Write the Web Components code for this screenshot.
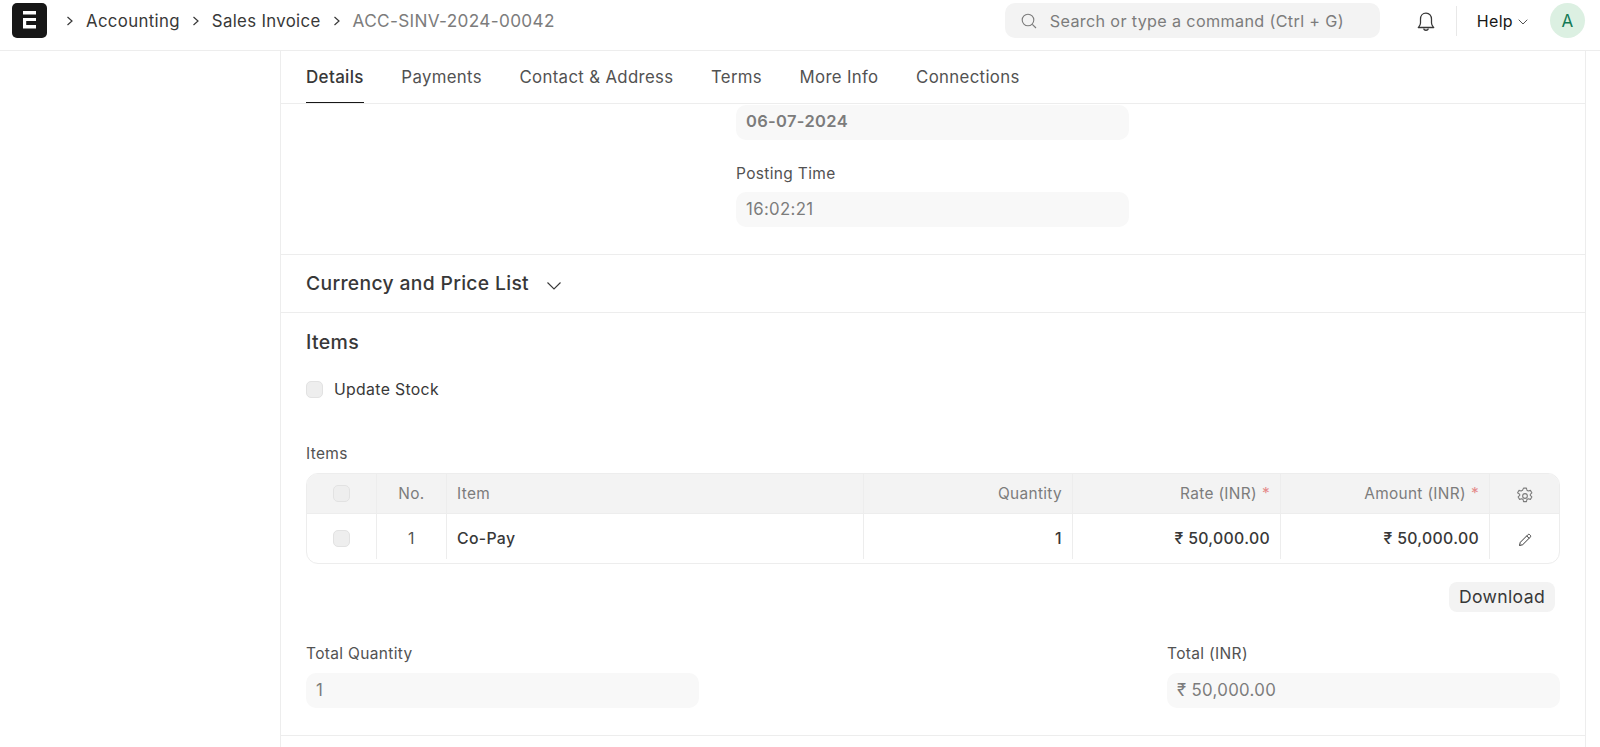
<!DOCTYPE html>
<html>
<head>
<meta charset="utf-8">
<title>ACC-SINV-2024-00042</title>
<style>
    html, body { margin: 0; padding: 0; background: #fff; overflow: hidden; height: 747px; }
    body { font-family: Inter, "Noto Sans", sans-serif; font-size: 16.8px; letter-spacing: 0.02em; color: #383838; }
</style>
</head>
<body>
<erp-navbar></erp-navbar>
<form-page>
    <form-tabs></form-tabs>
    <form-section pad="1px 25px 27px">
        <form-grid>
            <div></div>
            <div class="middle" style="margin: 0 38px 0 37px">
                <form-field value="06-07-2024" strong></form-field>
                <form-field label="Posting Time" value="16:02:21" style="margin-top: 24px"></form-field>
            </div>
        </form-grid>
    </form-section>
    <collapse-head>Currency and Price List</collapse-head>
    <form-section pad="17px 25px 26.5px">
        <section-title>Items</section-title>
        <check-field style="margin-top: 25px">Update Stock</check-field>
        <field-label style="margin-top: 45px; margin-bottom: 9px">Items</field-label>
        <items-table></items-table>
        <table-actions></table-actions>
        <form-grid style="margin-top: 32px; --label-gap: 9px">
            <form-field label="Total Quantity" value="1"></form-field>
            <div></div>
            <form-field label="Total (INR)" value="₹ 50,000.00"></form-field>
        </form-grid>
    </form-section>
</form-page>

<script>
class ErpNavbar extends HTMLElement {
    constructor() {
        super();
        this.attachShadow({ mode: 'open' });
        const chevron = `<svg class="crumb-sep" width="8" height="12" viewBox="0 0 8 12" fill="none" stroke="#383838" stroke-width="1.2"><path d="M1.5 2 L6 6 L1.5 10"/></svg>`;
        this.shadowRoot.innerHTML = `
            <style>
                :host { display: flex; align-items: center; height: 50px; border-bottom: 1px solid #ededed; box-sizing: content-box; padding: 0 15px 0 12px; }
                .logo { width: 35px; height: 35px; flex: none; margin-top: -9px; }
                .crumbs { display: flex; align-items: center; margin-left: 19px; margin-top: -9px; color: #383838; }
                .crumb-sep { margin-right: 12px; }
                .crumbs span { margin-right: 12px; }
                .crumbs span.current { color: #7c7c7c; margin: 0; font-size: 17.2px; }
                .right { margin-left: auto; display: flex; align-items: center; margin-top: -9px; }
                .search { width: 375px; height: 35px; box-sizing: border-box; background: #f3f3f3; border-radius: 10px; display: flex; align-items: center; padding-left: 16px; color: #7c7c7c; font-size: 16.2px; }
                .search svg { margin-right: 13px; flex: none; }
                .bell { margin-left: 35px; display: flex; margin-top: 2px; }
                .divider { width: 1px; height: 30px; background: #e8e8e8; margin-left: 19px; }
                .help { margin-left: 20px; color: #171717; font-size: 16px; }
                .help-arrow { margin-left: 5px; margin-top: 3px; }
                .avatar { width: 35px; height: 35px; border-radius: 50%; background: #dcf0e2; color: #137a55; display: flex; align-items: center; justify-content: center; margin-left: 22px; font-size: 17px; }
            </style>
            <svg class="logo" viewBox="0 0 35 35">
                <rect width="35" height="35" rx="5" fill="#171717"/>
                <path fill="#fff" d="M11 8h13v3.4H11z M11 15h13v3H14.2v4H24v3.4H11z"/>
            </svg>
            <div class="crumbs">
                ${chevron}<span>Accounting</span>${chevron}<span>Sales Invoice</span>${chevron}<span class="current">ACC-SINV-2024-00042</span>
            </div>
            <div class="right">
                <div class="search">
                    <svg width="16" height="16" viewBox="0 0 16 16" fill="none" stroke="#7c7c7c" stroke-width="1.1"><circle cx="7" cy="7" r="5.8"/><path d="M11.3 11.3 L15 15"/></svg>
                    <span>Search or type a command (Ctrl + G)</span>
                </div>
                <div class="bell">
                    <svg width="22" height="22" viewBox="0 0 20 20" fill="none" stroke="#383838" stroke-width="1.15" stroke-linejoin="round"><path d="M10 2 C6.8 2 5 4.4 5 7.4 V11 C5 13.2 3.6 14.3 3 15 H17 C16.4 14.3 15 13.2 15 11 V7.4 C15 4.4 13.2 2 10 2Z"/><path d="M8 16 C8 18 12 18 12 16"/></svg>
                </div>
                <div class="divider"></div>
                <span class="help">Help</span>
                <svg class="help-arrow" width="10" height="6" viewBox="0 0 10 6" fill="none" stroke="#525252" stroke-width="1"><path d="M.7 .7 L5 5 L9.3 .7"/></svg>
                <div class="avatar">A</div>
            </div>
        `;
    }
}

class FormPage extends HTMLElement {
    constructor() {
        super();
        this.attachShadow({ mode: 'open' });
        this.shadowRoot.innerHTML = `
            <style>
                :host { display: block; margin-left: 280px; width: 1306px; box-sizing: border-box; border-left: 1px solid #ededed; border-right: 1px solid #ededed; height: 696px; }
            </style>
            <slot></slot>
        `;
    }
}

class FormTabs extends HTMLElement {
    constructor() {
        super();
        this.attachShadow({ mode: 'open' });
        const tabs = ['Details', 'Payments', 'Contact & Address', 'Terms', 'More Info', 'Connections'];
        this.shadowRoot.innerHTML = `
            <style>
                :host { display: flex; gap: 37.5px; height: 52px; padding: 0 25px; border-bottom: 1px solid #ededed; }
                .tab { height: 52px; box-sizing: border-box; line-height: 52px; color: #525252; }
                .tab.active { color: #383838; font-weight: 500; font-size: 17px; border-bottom: 1px solid #171717; }
            </style>
            ${tabs.map((t, i) => `<div class="tab${i === 0 ? ' active' : ''}">${t.replace('&', '&amp;')}</div>`).join('')}
        `;
    }
}

class FormSection extends HTMLElement {
    constructor() {
        super();
        this.attachShadow({ mode: 'open' });
        this.shadowRoot.innerHTML = `
            <style>
                :host { display: block; border-bottom: 1px solid #ededed; padding: ${this.getAttribute('pad') || '0 25px'}; }
            </style>
            <slot></slot>
        `;
    }
}

class FormGrid extends HTMLElement {
    constructor() {
        super();
        this.attachShadow({ mode: 'open' });
        this.shadowRoot.innerHTML = `
            <style>
                :host { display: grid; grid-template-columns: 393px 1fr 393px; column-gap: 0; }
            </style>
            <slot></slot>
        `;
    }
}

class FormField extends HTMLElement {
    constructor() {
        super();
        this.attachShadow({ mode: 'open' });
        const label = this.getAttribute('label');
        this.shadowRoot.innerHTML = `
            <style>
                :host { display: block; }
                .label { font-size: 15.5px; line-height: 20px; color: #525252; margin-bottom: var(--label-gap, 8px); }
                .control { height: 35px; box-sizing: border-box; background: #f8f8f8; border-radius: 10px; padding: 0 10px; line-height: 34px; color: #7c7c7c; }
                :host([strong]) .control { font-weight: 600; font-size: 16.5px; line-height: 33px; }
            </style>
            ${label ? `<div class="label">${label}</div>` : ''}
            <div class="control">${this.getAttribute('value')}</div>
        `;
    }
}

class FieldLabel extends HTMLElement {
    constructor() {
        super();
        this.attachShadow({ mode: 'open' });
        this.shadowRoot.innerHTML = `
            <style>
                :host { display: block; font-size: 15.5px; line-height: 20px; color: #525252; }
            </style>
            <slot></slot>
        `;
    }
}

class CollapseHead extends HTMLElement {
    constructor() {
        super();
        this.attachShadow({ mode: 'open' });
        this.shadowRoot.innerHTML = `
            <style>
                :host { display: flex; align-items: center; height: 58px; padding: 0 25px 2px; box-sizing: border-box; border-bottom: 1px solid #ededed; font-size: 19.3px; font-weight: 500; color: #383838; }
                svg { margin-left: 17px; margin-top: 6px; }
            </style>
            <slot></slot>
            <svg width="16" height="10" viewBox="0 0 16 10" fill="none" stroke="#383838" stroke-width="1.1"><path d="M1.5 1.5 L8 8 L14.5 1.5"/></svg>
        `;
    }
}

class SectionTitle extends HTMLElement {
    constructor() {
        super();
        this.attachShadow({ mode: 'open' });
        this.shadowRoot.innerHTML = `
            <style>
                :host { display: block; font-size: 19.5px; font-weight: 500; line-height: 24px; color: #383838; }
            </style>
            <slot></slot>
        `;
    }
}

class CheckBox extends HTMLElement {
    constructor() {
        super();
        this.attachShadow({ mode: 'open' });
        this.shadowRoot.innerHTML = `
            <style>
                :host { display: block; width: 17px; height: 17px; box-sizing: border-box; background: #eeeeee; border: 1px solid #e2e2e2; border-radius: 5px; flex: none; }
            </style>
        `;
    }
}

class CheckField extends HTMLElement {
    constructor() {
        super();
        this.attachShadow({ mode: 'open' });
        this.shadowRoot.innerHTML = `
            <style>
                :host { display: flex; align-items: center; gap: 11px; height: 20px; color: #383838; font-size: 15.8px; }
            </style>
            <check-box></check-box>
            <slot></slot>
        `;
    }
}

class ItemsTable extends HTMLElement {
    constructor() {
        super();
        this.attachShadow({ mode: 'open' });
        this.shadowRoot.innerHTML = `
            <style>
                :host { display: block; border: 1px solid #ededed; border-radius: 12px; overflow: hidden; height: 89px; box-sizing: content-box; }
                .row { display: grid; grid-template-columns: 70px 70px 417px 209px 208px 209px 1fr; }
                .head { height: 39px; background: #f3f3f3; border-bottom: 1px solid #ededed; color: #7c7c7c; font-size: 15.4px; }
                .body { height: 45px; color: #383838; font-weight: 500; font-size: 15.8px; }
                .cell { display: flex; align-items: center; padding: 0 10px; border-right: 1px solid #ededed; min-width: 0; }
                .cell.num { justify-content: flex-end; }
                .cell.center { justify-content: center; padding: 0; }
                .cell.last { border-right: 0; }
                .body .cell { height: 45px; padding-top: 3px; box-sizing: border-box; }
                .body .no { font-weight: 400; color: #525252; }
                .req { color: #e58a8a; margin-left: 5px; }
                .gear { margin-top: 4px; }
                .pencil { margin-top: 4px; }
            </style>
            <div class="row head">
                <div class="cell center"><check-box></check-box></div>
                <div class="cell center">No.</div>
                <div class="cell">Item</div>
                <div class="cell num">Quantity</div>
                <div class="cell num">Rate (INR)<span class="req">*</span></div>
                <div class="cell num">Amount (INR)<span class="req">*</span></div>
                <div class="cell center last">
                    <svg class="gear" width="18" height="18" viewBox="0 0 16 16" fill="none" stroke="#7c7c7c" stroke-width="0.95" stroke-linejoin="round"><circle cx="8" cy="8" r="2.1"/><path d="M6.7 1 h2.6 l.4 1.9 1.2.7 1.9-.6 1.3 2.2-1.4 1.3 v1 l1.4 1.3-1.3 2.2-1.9-.6-1.2.7-.4 1.9 H6.7 l-.4-1.9-1.2-.7-1.9.6-1.3-2.2 1.4-1.3 v-1 L1.4 5.2 l1.3-2.2 1.9.6 1.2-.7z"/></svg>
                </div>
            </div>
            <div class="row body">
                <div class="cell center"><check-box></check-box></div>
                <div class="cell center no">1</div>
                <div class="cell">Co-Pay</div>
                <div class="cell num">1</div>
                <div class="cell num">₹ 50,000.00</div>
                <div class="cell num">₹ 50,000.00</div>
                <div class="cell center last">
                    <svg class="pencil" width="14" height="14" viewBox="0 0 14 14" fill="none" stroke="#383838" stroke-width="1" stroke-linejoin="round"><path d="M1.5 12.5 L2.3 9.3 L9.8 1.8 C10.4 1.2 11.3 1.2 11.9 1.8 L12.2 2.1 C12.8 2.7 12.8 3.6 12.2 4.2 L4.7 11.7 Z M8.7 2.9 L11.1 5.3"/></svg>
                </div>
            </div>
        `;
    }
}

class TableActions extends HTMLElement {
    constructor() {
        super();
        this.attachShadow({ mode: 'open' });
        this.shadowRoot.innerHTML = `
            <style>
                :host { display: flex; justify-content: flex-end; margin-top: 18px; padding-right: 5px; }
                .btn { height: 30px; line-height: 30px; padding: 0 10px; background: #f3f3f3; border-radius: 8px; color: #383838; font-size: 17.6px; }
            </style>
            <div class="btn">Download</div>
        `;
    }
}

customElements.define('erp-navbar', ErpNavbar);
customElements.define('form-page', FormPage);
customElements.define('form-tabs', FormTabs);
customElements.define('form-section', FormSection);
customElements.define('form-grid', FormGrid);
customElements.define('form-field', FormField);
customElements.define('field-label', FieldLabel);
customElements.define('collapse-head', CollapseHead);
customElements.define('section-title', SectionTitle);
customElements.define('check-box', CheckBox);
customElements.define('check-field', CheckField);
customElements.define('items-table', ItemsTable);
customElements.define('table-actions', TableActions);
</script>
</body>
</html>
